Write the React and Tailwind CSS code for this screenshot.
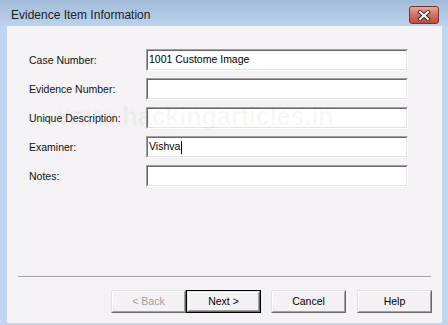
import React from "react";

const FONT = { fontFamily: '"Liberation Sans", Arial, sans-serif' };

function Field({ label, value, caret }) {
  return (
    <div className="flex h-[22px] items-center">
      <div className="w-[139px] pl-[22px] text-[10.5px] leading-none text-[#111]">{label}</div>
      <div className="h-[22px] w-[262px] border border-t-[#a0a0a0] border-l-[#a0a0a0] border-b-white border-r-white">
        <div className="flex h-full items-center border border-t-[#696969] border-l-[#696969] border-b-[#e3e3e3] border-r-[#e3e3e3] bg-white pl-[1px] text-[10.5px] text-black">
          {value}
          {caret && <span className="ml-[1px] inline-block h-[13px] w-px bg-black" />}
        </div>
      </div>
    </div>
  );
}

function Btn({ children, disabled, isDefault }) {
  const inner = (
    <div className="h-full w-full border border-t-[#e3e3e3] border-l-[#e3e3e3] border-b-[#696969] border-r-[#696969]">
      <div
        className={`flex h-full w-full items-center justify-center border border-t-white border-l-white border-b-[#a0a0a0] border-r-[#a0a0a0] bg-[#f4f1f4] text-[10.5px] ${
          disabled ? "text-[#a0a0a0]" : "text-black"
        }`}
      >
        {children}
      </div>
    </div>
  );
  if (isDefault) {
    return <div className="h-[23px] w-[75px] border border-black">{inner}</div>;
  }
  return <div className="h-[23px] w-[75px]">{inner}</div>;
}

export default function App() {
  return (
    <div className="flex h-[325px] w-[448px] flex-col bg-[#bfd5f0]" style={FONT}>
      {/* title bar */}
      <div className="relative flex h-[26px] items-center bg-gradient-to-b from-[#a2bbd8] to-[#bcd3ef] pl-[11px] pt-[3px]">
        <span className="text-[12px] text-[#1b1b1b]">Evidence Item Information</span>
        <div className="absolute left-[409px] top-[6px] flex h-[18px] w-[30px] items-center justify-center rounded-[3px] border border-[#7b3328] bg-gradient-to-b from-[#e6a99d] via-[#d1705f] to-[#c2493a]">
          <svg width="14" height="11" viewBox="0 0 14 11">
            <path d="M3 2 L11 9 M11 2 L3 9" stroke="#4a2a2a" strokeWidth="4" strokeLinecap="square" />
            <path d="M3 2 L11 9 M11 2 L3 9" stroke="#fff" strokeWidth="2" strokeLinecap="square" />
          </svg>
        </div>
      </div>

      <div className="flex flex-1 pb-[2px]">
        <div className="w-[7px]" />
        <div className="relative flex flex-1 flex-col bg-[#f5f2f5]">
          <div className="flex flex-col gap-[7px] pt-[23px]">
            <Field label="Case Number:" value="1001 Custome Image" />
            <Field label="Evidence Number:" value="" />
            <Field label="Unique Description:" value="" />
            <Field label="Examiner:" value="Vishva" caret />
            <Field label="Notes:" value="" />
          </div>

          <div className="pointer-events-none absolute left-[51px] top-[72px] text-[25px] font-bold text-black/[0.04]">
            www.hackingarticles.in
          </div>

          <div className="flex-1" />
          <div className="mx-[11px] h-[2px] border-t border-t-[#a0a0a0] border-b border-b-white" />
          <div className="mt-[12px] flex justify-end pb-[10px] pr-[10px]">
            <Btn disabled>&lt; Back</Btn>
            <Btn isDefault>Next &gt;</Btn>
            <div className="w-[10px]" />
            <Btn>Cancel</Btn>
            <div className="w-[11px]" />
            <Btn>Help</Btn>
          </div>
        </div>
        <div className="w-[6px]" />
      </div>
    </div>
  );
}
